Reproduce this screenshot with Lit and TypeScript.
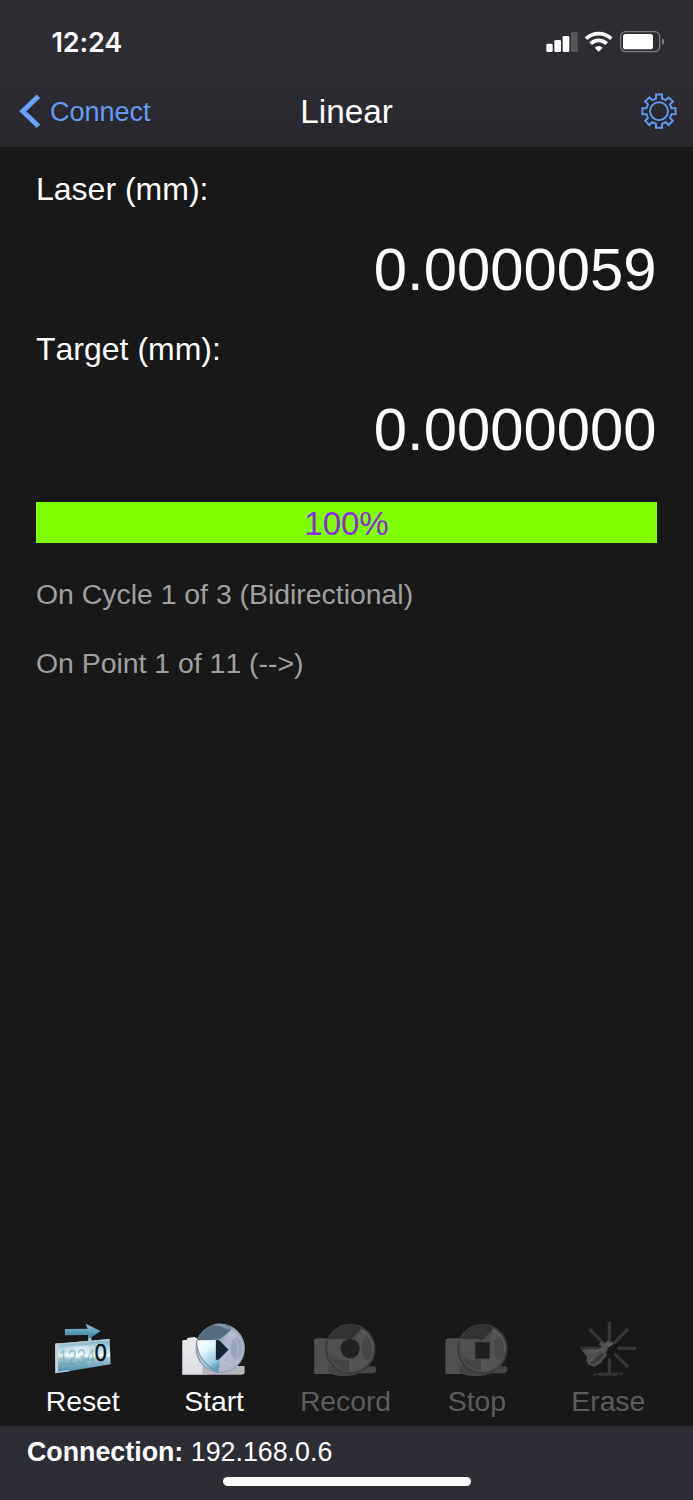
import { LitElement, html, svg, css } from "lit";
import { customElement, property } from "lit/decorators.js";

const gearPath = (() => {
  const pts: string[] = [];
  const corners: [number, number][] = [[-3, -12.6], [-3, -16.6], [3, -16.6], [3, -12.6]];
  for (let k = 0; k < 8; k++) {
    const a = (k * Math.PI) / 4;
    for (const [x, y] of corners) {
      pts.push(
        `${(x * Math.cos(a) - y * Math.sin(a)).toFixed(2)} ${(x * Math.sin(a) + y * Math.cos(a)).toFixed(2)}`
      );
    }
  }
  return `M${pts.join("L")}Z`;
})();

const resetIcon = svg`
  <defs>
    <linearGradient id="panel" x1="0" y1="0" x2="0" y2="1">
      <stop offset="0" stop-color="#86b0c6"/><stop offset=".25" stop-color="#a9cfdd"/>
      <stop offset=".48" stop-color="#e8f8fa"/><stop offset=".56" stop-color="#a3c8d8"/>
      <stop offset="1" stop-color="#4787a8"/>
    </linearGradient>
    <linearGradient id="arrow" x1="0" y1="0" x2="0" y2="1">
      <stop offset="0" stop-color="#9ac6da"/><stop offset=".5" stop-color="#5f9dbd"/><stop offset="1" stop-color="#3f7898"/>
    </linearGradient>
    <linearGradient id="glow" x1="0" y1="0" x2="1" y2="0">
      <stop offset="0" stop-color="#fff" stop-opacity="0"/><stop offset=".5" stop-color="#fff" stop-opacity=".55"/>
      <stop offset="1" stop-color="#fff" stop-opacity="0"/>
    </linearGradient>
  </defs>
  <g transform="translate(-2.7 -10) scale(.33333)">
    <path d="M174 76h9v18h-9z" fill="#c5d4dc"/>
    <path d="M104 57L172 56L166 41L211 63L176 87L174 75L104 76Z" fill="url(#arrow)"/>
    <path d="M75 101L238 87L241 163L115 184L75 190Z" fill="url(#panel)"/>
    <path d="M90 112L215 104V140L90 148Z" fill="url(#glow)"/>
    <path d="M75 101L84 99L83 185L75 190Z" fill="#c9d0da"/>
    <path d="M75 101L238 87V91L76 105Z" fill="#b5cbd8"/>
    <path d="M75 186L112 180L118 184L75 190Z" fill="#b9c4d0"/>
    <text x="86" y="165" font-family="Liberation Sans" font-size="64" textLength="110" lengthAdjust="spacingAndGlyphs" transform="rotate(-2 86 165)" fill="#5fa397" fill-opacity=".6">1234</text>
    <text x="193" y="153" font-family="Liberation Sans" font-size="70" textLength="36" lengthAdjust="spacingAndGlyphs" fill="#080d12" stroke="#080d12" stroke-width="1.5">0</text>
  </g>`;

const startIcon = svg`
  <defs>
    <linearGradient id="box" x1="0" y1="0" x2="0" y2="1"><stop offset="0" stop-color="#ececef"/><stop offset="1" stop-color="#dcdde4"/></linearGradient>
    <linearGradient id="lens" x1="0" y1="0" x2="1" y2="1"><stop offset="0" stop-color="#a3b8cd"/><stop offset="1" stop-color="#9fa5ba"/></linearGradient>
    <linearGradient id="beam" x1="0" y1="0" x2=".6" y2="1"><stop offset="0" stop-color="#ffffff"/><stop offset=".4" stop-color="#e3f5fb"/><stop offset=".8" stop-color="#9accdf"/><stop offset="1" stop-color="#5c9dc0"/></linearGradient>
  </defs>
  <g transform="translate(5.9 -10) scale(.33333)">
    <path d="M37 94Q37 90 43 90L52 89V84L74 81L84 87H110V194H37Z" fill="url(#box)"/>
    <path d="M98 168H224V190Q222 194 214 194H98Z" fill="#b4b5be"/>
    <circle cx="151" cy="115" r="72" fill="url(#lens)" stroke="#8f9fb4" stroke-width="4"/>
    <path d="M82 92Q94 58 128 44L164 41Q183 47 184 59L151 88Z" fill="#566a80"/>
    <path d="M128 44Q160 34 182 55L178 60Q151 47 128 44Z" fill="#7d93a8"/>
    <path d="M80 91H141L151 119L146 187Q82 178 80 91Z" fill="url(#beam)"/>
    <path d="M80 91Q80 155 146 187" fill="none" stroke="#7d8c9b" stroke-width="3.5"/>
    <path d="M151 111L184 59Q237 88 215 145Q198 185 148 185Z" fill="#b4bbd0" fill-opacity=".85"/>
    <ellipse cx="199" cy="115" rx="17" ry="34" fill="#8d99b0" fill-opacity=".65"/>
    <path d="M177 65Q213 92 202 147M153 146Q169 169 189 165" fill="none" stroke="#ccd4e4" stroke-width="5" stroke-opacity=".3"/>
    <path d="M138 90H147L176 119L146 149H138Z" fill="#162333"/>
  </g>`;

const dimLens = (cx: number, left: number) => svg`
    <path d="M${left} 89L${left + 8} 85H${left + 44}L${left + 54} 84V192H${left}Z" fill="#505050"/>
    <path d="M${left + 40} 169H${left + 178}Q${left + 188} 169 ${left + 186} 180Q${left + 184} 190 ${left + 172} 190H${left + 135}Q${left + 122} 200 ${left + 70} 197L${left + 45} 191Z" fill="#454545"/>
    <circle cx="${cx}" cy="117" r="73" fill="#4c4c4c" stroke="#3b3b3b" stroke-width="5"/>
    <path d="M${cx - 64} 87Q${cx - 42} 49 ${cx - 14} 44H${cx + 12}Q${cx + 30} 48 ${cx + 31} 59L${cx} 89Z" fill="#323232"/>
    <path d="M${cx - 69} 87H${cx - 12}L${cx + 2} 118L${cx - 3} 186Q${cx - 66} 171 ${cx - 69} 87Z" fill="#515151"/>
    <path d="M${cx - 65} 130Q${cx - 46} 176 ${cx - 3} 183V150Q${cx - 46} 156 ${cx - 65} 130Z" fill="#454545"/>
    <path d="M${cx + 5} 119L${cx + 31} 61Q${cx + 82} 95 ${cx + 55} 154Q${cx + 38} 181 ${cx} 184Z" fill="#575757" fill-opacity=".7"/>
    <ellipse cx="${cx + 49}" cy="115" rx="15" ry="34" fill="#484848"/>
    <path d="M${cx - 1} 146V184M${cx + 31} 58Q${cx + 70} 80 ${cx + 67} 124" fill="none" stroke="#5e5e5e" stroke-width="4"/>`;

const recordIcon = svg`
  <g transform="translate(-.5 -10) scale(.33333)">
    ${dimLens(168, 59)}
    <circle cx="167" cy="116" r="29" fill="#222"/>
  </g>`;

const stopIcon = svg`
  <g transform="translate(3.1 -10) scale(.33333)">
    ${dimLens(157, 46)}
    <path d="M136 97H178V146H136Z" fill="#1e1e1e" stroke="#303030" stroke-width="3"/>
  </g>`;

const eraseIcon = svg`
  <g transform="translate(1.7 -10) scale(.33333)">
    <g fill="none" stroke="#353535" stroke-width="10">
      <path d="M149 36V104M149 145V192M62 115H128M173 115H229M89 57L132 100M205 57L162 100M164 131L205 171"/>
      <path d="M100 195L120 191H190M118 195H172" stroke-width="5"/>
    </g>
    <path d="M66 121L78 118L119 116L129 108L117 105L122 96L138 98L144 91L151 98L162 94L160 104L147 110L139 130L143 136L132 146L123 159L103 170L86 164L80 151L82 140Z" fill="#4e4e4e"/>
    <path d="M82 128L112 124L129 117M87 153L114 142L134 119M105 165L116 150L136 132" fill="none" stroke="#5c5c5c" stroke-width="5"/>
    <path d="M91 160L127 127L135 134L103 166Z" fill="#393939"/>
    <path d="M124 101L132 111L142 101L147 108L158 99" fill="none" stroke="#5c5c5c" stroke-width="5"/>
  </g>`;

@customElement("tool-button")
class ToolButton extends LitElement {
  @property() label = "";
  @property({ attribute: false }) icon: unknown;
  @property({ type: Boolean, reflect: true }) disabled = false;

  static styles = css`
    :host {
      display: flex;
      flex-direction: column;
      align-items: center;
      color: #fff;
    }
    :host([disabled]) {
      color: #5c5c5c;
    }
    .icon {
      display: block;
      width: 100px;
      height: 60px;
    }
    .label {
      font-size: 28.3px;
      line-height: 42px;
    }
  `;

  render() {
    return html`<svg class="icon" viewBox="0 0 100 60">${this.icon}</svg>
      <span class="label">${this.label}</span>`;
  }
}

@customElement("app-root")
class AppRoot extends LitElement {
  static styles = css`
    :host {
      display: flex;
      flex-direction: column;
      box-sizing: border-box;
      height: 1500px;
      background: #181818;
      color: #fff;
      font-family: "Liberation Sans", Arial, sans-serif;
      font-kerning: none;
      white-space: nowrap;
    }
    .header {
      height: 147px;
      flex: none;
      background: linear-gradient(#2d2c32 0, #2d2c32 78px, #27262c 147px);
    }
    .status {
      display: flex;
      justify-content: space-between;
      height: 28px;
      padding: 28px 23px 0 51.5px;
    }
    .time {
      padding-top: 1px;
      font: 600 27px/28px Inter, sans-serif;
      letter-spacing: -0.1px;
    }
    .signals {
      width: 130px;
      height: 28px;
    }
    .nav {
      display: grid;
      grid-template-columns: 1fr auto 1fr;
      align-items: center;
      height: 50px;
      margin-top: 30px;
      padding: 0 14px 0 18px;
    }
    .back {
      display: flex;
      align-items: center;
      gap: 1px;
      color: #6699f2;
      font-size: 27px;
      line-height: 52px;
    }
    .chevron {
      width: 31px;
      height: 36px;
    }
    .title {
      margin-right: 4px;
      font-size: 33.3px;
      line-height: 52px;
    }
    .gear {
      width: 40px;
      height: 40px;
      justify-self: end;
    }
    .content {
      flex: 1;
      padding: 22px 36px 0;
    }
    .label {
      font-size: 32px;
      line-height: 40px;
    }
    .value {
      margin: 21px 0 19px;
      padding-right: 0.5px;
      font-size: 59.8px;
      line-height: 80px;
      text-align: right;
    }
    .progress {
      margin-top: 32px;
      height: 41px;
      background: #80ff00;
      color: #8a2be2;
      font-size: 33px;
      line-height: 43px;
      text-align: center;
    }
    .info {
      color: #a0a0a0;
      font-size: 28.4px;
      line-height: 40px;
      margin-top: 31px;
    }
    .info + .info {
      margin-top: 29px;
    }
    .tools {
      display: grid;
      grid-template-columns: repeat(5, 1fr);
      height: 106px;
      padding: 0 19px 0 17px;
    }
    .footer {
      display: flex;
      flex-direction: column;
      height: 74px;
      background: #2d2d36;
    }
    .connection {
      padding-left: 27px;
      margin-top: 6px;
      font-size: 26.8px;
      line-height: 40px;
    }
    .home {
      width: 248px;
      height: 9px;
      margin: 5px auto 0;
      border-radius: 5px;
      background: #fff;
    }
  `;

  render() {
    return html`
      <header class="header">
        <div class="status">
          <span class="time">12:24</span>
          <svg class="signals" viewBox="0 0 130 28">
            <g transform="translate(-10 -8) scale(.33333)">
              <g fill="#fff">
                <rect x="49" y="71" width="19" height="25" rx="4" />
                <rect x="73" y="60" width="20" height="36" rx="4" />
                <rect x="98" y="48" width="20" height="48" rx="4" />
                <rect x="123" y="36" width="20" height="60" rx="4" fill="#57565b" />
                <path d="M206 95L194 83Q206 73 218 83Z" />
              </g>
              <g fill="none" stroke="#fff" stroke-width="11.5">
                <path d="M168 56A55 55 0 0 1 244 56" />
                <path d="M182 71A34 34 0 0 1 230 71" />
              </g>
              <rect x="272" y="35" width="117" height="60" rx="15" fill="none" stroke="#7b7a7f" stroke-width="4" />
              <rect x="279" y="42" width="90" height="46" rx="8" fill="#fff" />
              <path d="M396 55Q403 58 403 65T396 75Z" fill="#7b7a7f" />
            </g>
          </svg>
        </div>
        <nav class="nav">
          <span class="back">
            <svg class="chevron" viewBox="0 0 31 36">
              <path d="M20.5 2.3L4.8 17.3L20.5 32.3" fill="none" stroke="#6ba0fb" stroke-width="5" />
            </svg>
            Connect
          </span>
          <span class="title">Linear</span>
          <svg class="gear" viewBox="-20 -19.2 40 40" fill="none" stroke="#6196ee" stroke-width="2">
            <path d=${gearPath} />
            <circle r="9" />
          </svg>
        </nav>
      </header>
      <main class="content">
        <div class="label">Laser (mm):</div>
        <div class="value">0.0000059</div>
        <div class="label">Target (mm):</div>
        <div class="value">0.0000000</div>
        <div class="progress">100%</div>
        <div class="info">On Cycle 1 of 3 (Bidirectional)</div>
        <div class="info">On Point 1 of 11 (--&gt;)</div>
      </main>
      <div class="tools">
        <tool-button label="Reset" .icon=${resetIcon}></tool-button>
        <tool-button label="Start" .icon=${startIcon}></tool-button>
        <tool-button label="Record" .icon=${recordIcon} disabled></tool-button>
        <tool-button label="Stop" .icon=${stopIcon} disabled></tool-button>
        <tool-button label="Erase" .icon=${eraseIcon} disabled></tool-button>
      </div>
      <footer class="footer">
        <div class="connection"><b>Connection:</b> 192.168.0.6</div>
        <div class="home"></div>
      </footer>
    `;
  }
}
